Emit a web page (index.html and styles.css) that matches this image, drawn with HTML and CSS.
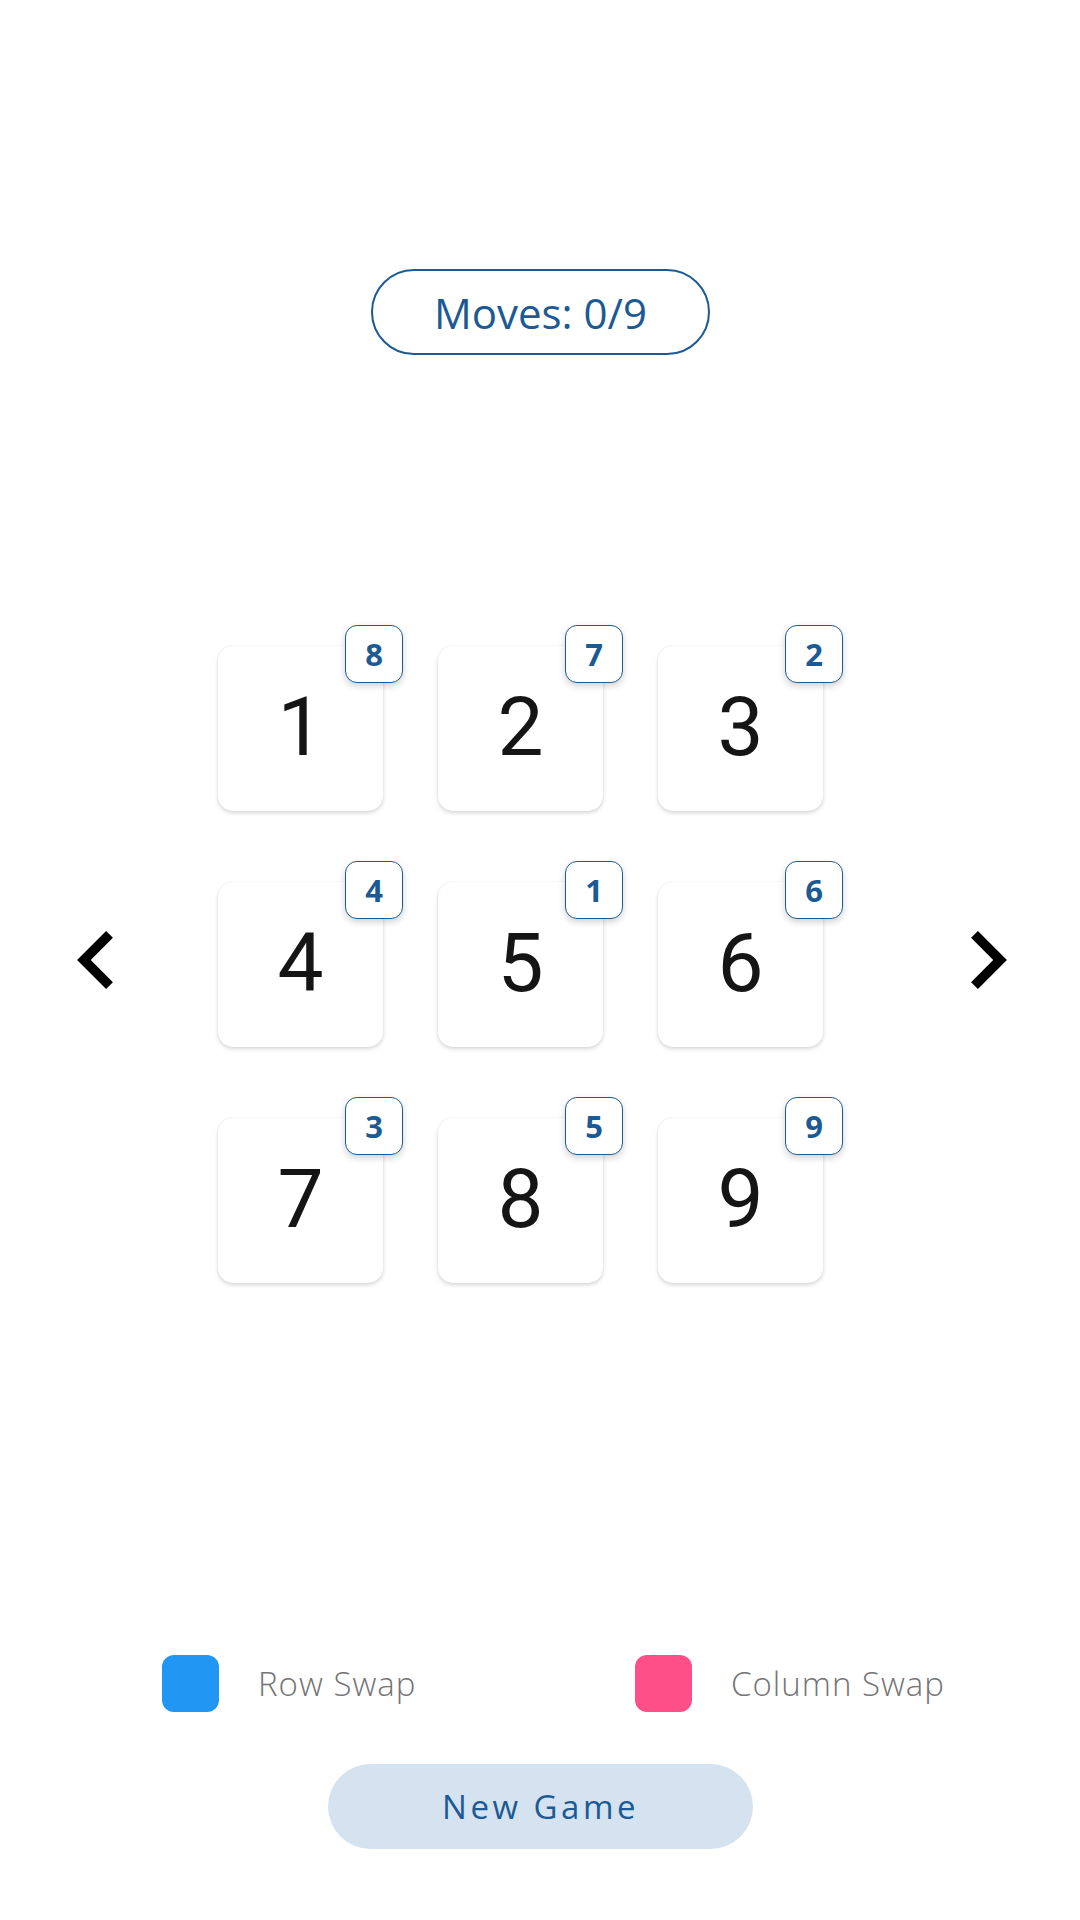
FILE: index.html
```html
<!DOCTYPE html>
<html>
<head>
<meta charset="utf-8">
<link rel="stylesheet" href="styles.css">
</head>
<body>
<div class="page">
  <div class="moves">Moves: 0/9</div>
  <div class="board-row">
    <svg class="arrow arrow-left" viewBox="8 6 7.41 12" width="36" height="58"><path d="M15.41 7.41L14 6l-6 6 6 6 1.41-1.41L10.83 12z" fill="#000"/></svg>
    <div class="grid">
      <div class="tile">1<span class="badge">8</span></div>
      <div class="tile">2<span class="badge">7</span></div>
      <div class="tile">3<span class="badge">2</span></div>
      <div class="tile">4<span class="badge">4</span></div>
      <div class="tile">5<span class="badge">1</span></div>
      <div class="tile">6<span class="badge">6</span></div>
      <div class="tile">7<span class="badge">3</span></div>
      <div class="tile">8<span class="badge">5</span></div>
      <div class="tile">9<span class="badge">9</span></div>
    </div>
    <svg class="arrow arrow-right" viewBox="8.59 6 7.41 12" width="36" height="58"><path d="M10 6L8.59 7.41 13.17 12l-4.58 4.59L10 18l6-6z" fill="#000"/></svg>
  </div>
  <div class="legend">
    <div class="legend-item"><span class="swatch swatch-row"></span><span class="legend-label">Row Swap</span></div>
    <div class="legend-item"><span class="swatch swatch-col"></span><span class="legend-label">Column Swap</span></div>
  </div>
  <div class="actions">
    <button class="new-game">New Game</button>
  </div>
</div>
</body>
</html>
```
FILE: styles.css
```css
html, body {
  margin: 0;
  padding: 0;
  background: #ffffff;
}
.page {
  width: 1080px;
  height: 1920px;
  font-family: "Open Sans", "Noto Sans", sans-serif;
  display: flex;
  flex-direction: column;
  padding-top: 269px;
  box-sizing: border-box;
}
.moves {
  align-self: center;
  width: 339px;
  height: 86px;
  box-sizing: border-box;
  border: 2px solid #1b5a94;
  border-radius: 43px;
  color: #1b5a94;
  font-size: 42px;
  display: flex;
  align-items: center;
  justify-content: center;
  margin-left: 1px;
}
.board-row {
  display: flex;
  align-items: flex-start;
  margin-top: 291px;
}
.arrow {
  display: block;
  margin-top: 285px;
}
.arrow-left {
  margin-left: 77px;
}
.grid {
  margin-left: 105px;
  display: grid;
  grid-template-columns: repeat(3, 165px);
  grid-auto-rows: 165px;
  column-gap: 55px;
  row-gap: 71px;
}
.arrow-right {
  margin-left: 148px;
}
.tile {
  position: relative;
  background: #ffffff;
  border-radius: 15px;
  box-shadow: 0 2px 4px rgba(0, 0, 0, 0.16), 0 0 2px rgba(0, 0, 0, 0.06);
  display: flex;
  align-items: center;
  justify-content: center;
  font-family: Roboto, "Open Sans", sans-serif;
  font-size: 82px;
  font-weight: 400;
  color: #151515;
  line-height: 1;
  padding-bottom: 3px;
  box-sizing: border-box;
}
.badge {
  position: absolute;
  top: -21px;
  right: -20px;
  width: 58px;
  height: 58px;
  box-sizing: border-box;
  border: 1.5px solid #1b5a94;
  border-radius: 12px;
  background: #ffffff;
  box-shadow: 0 3px 7px rgba(0, 0, 0, 0.18);
  color: #1b5a94;
  font-family: "Open Sans", "Noto Sans", sans-serif;
  font-size: 31px;
  font-weight: 700;
  display: flex;
  align-items: center;
  justify-content: center;
}
.legend {
  display: grid;
  grid-template-columns: 473px auto;
  padding-left: 162px;
  margin-top: 372px;
}
.legend-item {
  display: flex;
  align-items: center;
}
.swatch {
  width: 57px;
  height: 57px;
  border-radius: 12px;
  display: block;
}
.swatch-row {
  background: #2196f3;
}
.swatch-col {
  background: #ff4f88;
}
.legend-label {
  margin-left: 39px;
  font-size: 33px;
  letter-spacing: 1px;
  font-weight: 300;
  color: #747474;
}
.actions {
  display: flex;
  justify-content: center;
  margin-top: 52px;
}
.new-game {
  width: 425px;
  height: 85px;
  border: none;
  border-radius: 43px;
  background: #d5e3f1;
  color: #1b5a94;
  font-family: "Open Sans", "Noto Sans", sans-serif;
  font-size: 33px;
  letter-spacing: 3.5px;
  font-weight: 400;
  margin-left: 1px;
  padding: 0;
}
```
